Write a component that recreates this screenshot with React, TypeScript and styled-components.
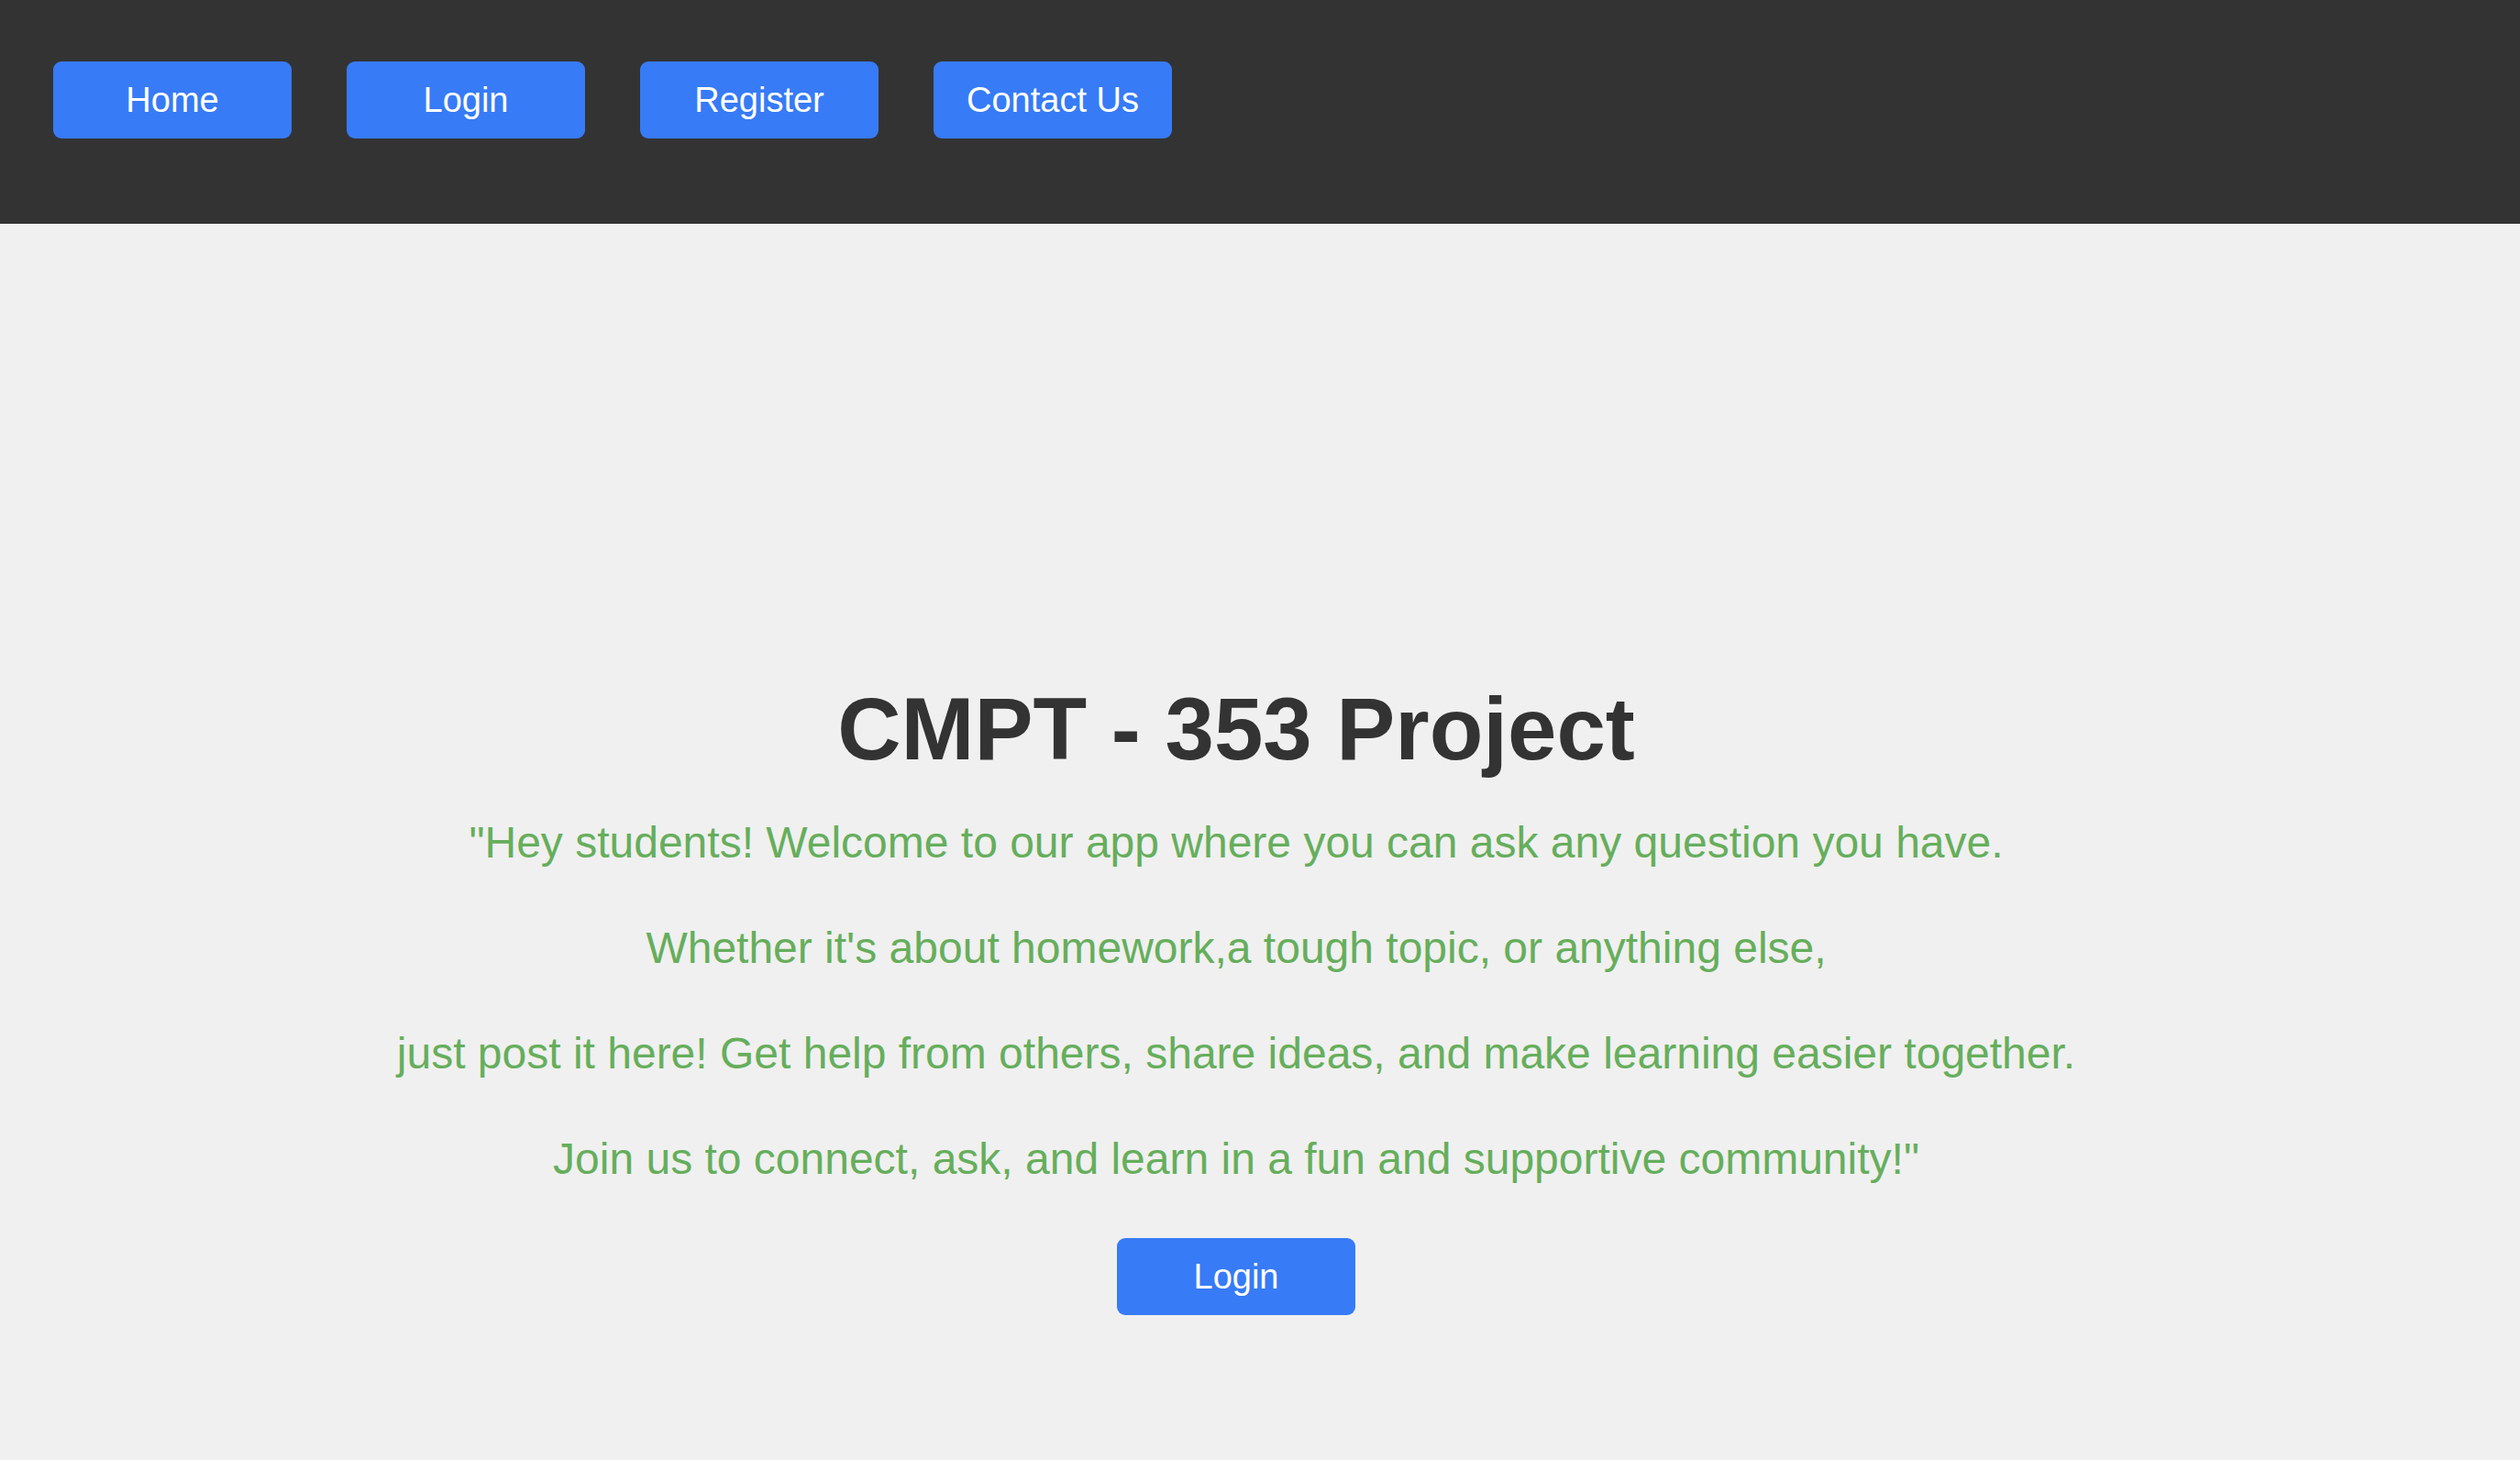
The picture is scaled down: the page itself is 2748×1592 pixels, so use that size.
import React from "react";
import styled, { createGlobalStyle } from "styled-components";

const GlobalStyle = createGlobalStyle`
  html, body {
    margin: 0;
    padding: 0;
    background: #f0f0f0;
    font-family: "Liberation Sans", Arial, sans-serif;
  }
`;

const Header = styled.header`
  background: #333333;
  height: 244px;
  box-sizing: border-box;
  padding: 67px 58px 0;
`;

const Nav = styled.nav`
  display: flex;
  gap: 60px;
`;

const Button = styled.button`
  width: 260px;
  height: 84px;
  border: none;
  border-radius: 9px;
  background: #377bf6;
  color: #ffffff;
  font-family: "Liberation Sans", Arial, sans-serif;
  font-size: 38px;
  cursor: pointer;
  padding: 0;
`;

const Main = styled.main`
  display: flex;
  flex-direction: column;
  align-items: center;
  padding: 503px 52px 0 0;
  height: 1348px;
  box-sizing: border-box;
`;

const Title = styled.h1`
  margin: 0;
  font-size: 96px;
  line-height: 96px;
  font-weight: 700;
  color: #333333;
`;

const Message = styled.div`
  display: flex;
  flex-direction: column;
  align-items: center;
  gap: 65.5px;
  margin-top: 50.5px;
`;

const Line = styled.p`
  margin: 0;
  font-size: 48px;
  line-height: 49.5px;
  color: #66ae5c;
  text-align: center;
`;

const Action = styled(Button)`
  margin-top: 62px;
`;

const lines = [
  "\"Hey students! Welcome to our app where you can ask any question you have.",
  "Whether it's about homework,a tough topic, or anything else,",
  "just post it here! Get help from others, share ideas, and make learning easier together.",
  "Join us to connect, ask, and learn in a fun and supportive community!\"",
];

export default function App() {
  return (
    <>
      <GlobalStyle />
      <Header>
        <Nav>
          <Button>Home</Button>
          <Button>Login</Button>
          <Button>Register</Button>
          <Button>Contact Us</Button>
        </Nav>
      </Header>
      <Main>
        <Title>CMPT - 353 Project</Title>
        <Message>
          {lines.map((l) => (
            <Line key={l}>{l}</Line>
          ))}
        </Message>
        <Action>Login</Action>
      </Main>
    </>
  );
}
